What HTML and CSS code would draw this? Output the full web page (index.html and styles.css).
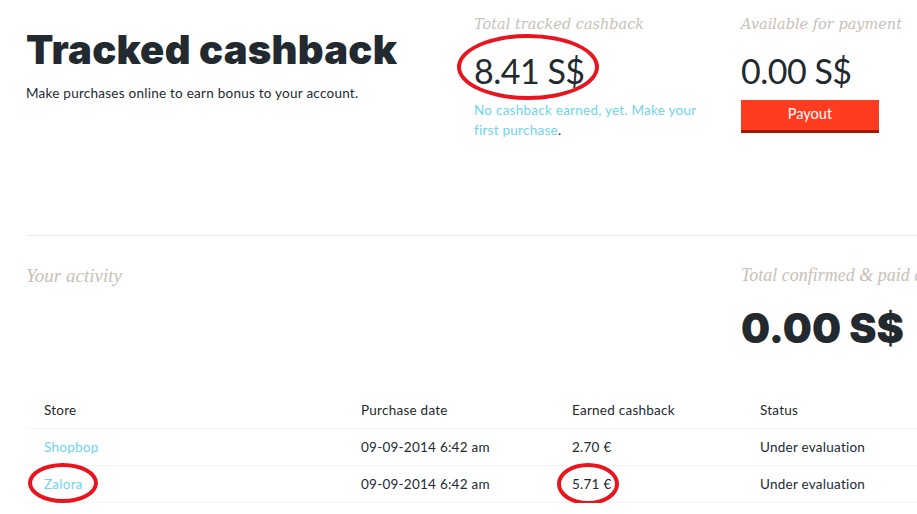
FILE: index.html
```html
<!DOCTYPE html>
<html lang="en">
<head>
  <meta charset="UTF-8" />
  <title>Tracked cashback</title>
  <link rel="stylesheet" href="styles.css">
</head>
<body>
  <div class="page">
    <div class="top">
      <div class="intro">
        <h1>Tracked cashback</h1>
        <p class="lead">Make purchases online to earn bonus to your account.</p>
      </div>

      <div class="stat tracked">
        <h3 class="label">Total tracked cashback</h3>
        <div class="amount"><span class="mark mark-total">8.41 S$</span></div>
        <p class="note"><a href="#">No cashback earned, yet. Make your first purchase</a>.</p>
      </div>

      <div class="stat">
        <h3 class="label">Available for payment</h3>
        <div class="amount">0.00 S$</div>
        <button class="payout">Payout</button>
      </div>
    </div>

    <hr class="divider">

    <div class="activity">
      <h3 class="label">Your activity</h3>
      <div class="confirmed">
        <h3 class="label">Total confirmed &amp; paid cashback</h3>
        <div class="big">0.00 S$</div>
      </div>
    </div>

    <table class="orders">
      <thead>
        <tr>
          <th class="c-store">Store</th>
          <th class="c-date">Purchase date</th>
          <th class="c-earned">Earned cashback</th>
          <th>Status</th>
        </tr>
      </thead>
      <tbody>
        <tr>
          <td><a href="#">Shopbop</a></td>
          <td>09-09-2014 6:42 am</td>
          <td>2.70 €</td>
          <td>Under evaluation</td>
        </tr>
        <tr>
          <td><a href="#" class="mark mark-store">Zalora</a></td>
          <td>09-09-2014 6:42 am</td>
          <td><span class="mark mark-euro">5.71 €</span></td>
          <td>Under evaluation</td>
        </tr>
      </tbody>
    </table>
  </div>
</body>
</html>
```

FILE: styles.css
```css
html, body {
  margin: 0;
  overflow: hidden;
}

body {
  font-family: Lato, "Noto Sans", sans-serif;
  color: #222a30;
  background: #fff;
}

.page {
  width: 1100px;
  padding: 0 0 0 26px;
}

a {
  color: #6fd3ee;
  text-decoration: none;
}

.top {
  display: flex;
  height: 235px;
}

.intro {
  width: 448px;
  padding-top: 28px;
}

h1 {
  margin: 0;
  font-family: Inter, sans-serif;
  font-weight: 900;
  font-size: 40px;
  letter-spacing: 0.25px;
  line-height: 44px;
}

.lead {
  margin: 13px 0 0;
  font-size: 13.5px;
  letter-spacing: 0.25px;
}

.label {
  margin: 0;
  font-family: "DejaVu Serif", serif;
  font-style: italic;
  font-weight: normal;
  font-size: 14.5px;
  color: #c9c0b6;
  white-space: nowrap;
}

.stat {
  width: 267px;
  padding-top: 16px;
}

.amount {
  margin-top: 19px;
  height: 40px;
  font-size: 34px;
  line-height: 40px;
  letter-spacing: -0.5px;
}

.note {
  margin: 9px 0 0;
  font-size: 13.5px;
  letter-spacing: 0.25px;
  line-height: 20px;
  width: 235px;
}

.payout {
  margin-top: 9px;
  width: 138px;
  height: 33px;
  padding: 0 0 3px;
  border: none;
  border-bottom: 3px solid #a11a02;
  background: #ff3c1f;
  color: #fff;
  font-family: Lato, sans-serif;
  font-size: 14.5px;
  cursor: pointer;
}

.divider {
  margin: 0;
  border: none;
  border-top: 1px solid #ededed;
}

.activity {
  display: flex;
  height: 156px;
  padding-top: 29px;
  box-sizing: border-box;
}

.activity > .label {
  width: 715px;
  font-family: "Liberation Serif", serif;
  font-size: 19px;
}

.confirmed .label {
  font-family: "Liberation Serif", serif;
  font-size: 18px;
}

.big {
  margin-top: 19px;
  font-family: Inter, sans-serif;
  font-weight: 900;
  font-size: 41px;
  line-height: 46px;
}

.orders {
  width: 1000px;
  border-collapse: collapse;
  font-size: 13.5px;
  letter-spacing: 0.25px;
}

.orders th, .orders td {
  text-align: left;
  font-weight: normal;
  padding: 0;
  height: 36px;
  border-bottom: 1px solid #f4f4f4;
}

.orders th:first-child, .orders td:first-child {
  padding-left: 18px;
}

.c-store { width: 317px; }
.c-date { width: 211px; }
.c-earned { width: 188px; }

/* red hand-drawn rings from the screenshot */
.mark {
  position: relative;
  display: inline-block;
  height: 16px;
  line-height: 16px;
}

.mark::after {
  content: "";
  position: absolute;
  border: 4px solid #e8141e;
  border-radius: 50%;
}

.mark-total {
  height: 40px;
  line-height: 40px;
}

.mark-total::after {
  left: -17px;
  right: -14px;
  top: -17px;
  bottom: -9px;
}

.mark-store::after {
  left: -16px;
  right: -15px;
  top: -13px;
  bottom: -11px;
}

.mark-euro::after {
  left: -15px;
  right: -8px;
  top: -13px;
  bottom: -13px;
}
```
